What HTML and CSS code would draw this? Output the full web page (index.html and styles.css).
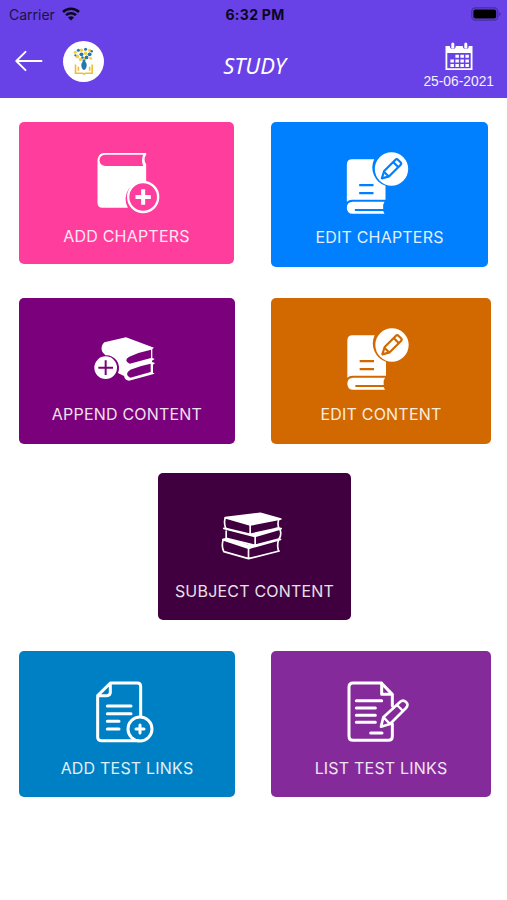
FILE: index.html
```
<!DOCTYPE html>
<html lang="en">
<head>
  <meta charset="UTF-8">
  <meta name="viewport" content="width=device-width, initial-scale=1.0">
  <title>Study</title>
  <link rel="stylesheet" href="styles.css">
</head>
<body>
  <header class="header">
    <div class="status-bar">
      <div class="status-left">
        <span class="carrier">Carrier</span>
        <svg class="wifi" viewBox="0 0 18 14" fill="none" stroke="#0b0620">
          <path d="M1 5a11.5 11.5 0 0 1 16 0" stroke-width="2.5"/>
          <path d="M4 8.2a7.2 7.2 0 0 1 10 0" stroke-width="2.5"/>
          <path d="M9 13.5 6 10.6a4.3 4.3 0 0 1 6 0z" fill="#0b0620" stroke="none"/>
        </svg>
      </div>
      <span class="time">6:32 PM</span>
      <svg class="battery" viewBox="0 0 30 14">
        <rect x=".8" y=".8" width="26" height="12.4" rx="3.6" fill="none" stroke="#43309a" stroke-width="1.2"/>
        <rect x="2.4" y="2.4" width="22.8" height="9.2" rx="2" fill="#000"/>
        <path d="M28.2 5v4q1.4-.6 1.4-2t-1.4-2z" fill="#43309a"/>
      </svg>
    </div>
    <div class="nav-bar">
      <div class="nav-left">
        <a class="back" href="#" aria-label="Back">
          <svg viewBox="0 0 28 22" fill="none" stroke="#fff" stroke-width="1.9" stroke-linecap="round" stroke-linejoin="round"><path d="M26.5 11H1.5M10.5 1.8 1.3 11l9.2 9.2"/></svg>
        </a>
        <div class="logo">
          <svg viewBox="0 0 40 40">
            <g fill="#f2cf3b">
              <circle cx="12" cy="11" r="1.5"/><circle cx="14" cy="15" r="1.8"/><circle cx="18" cy="9" r="1.6"/><circle cx="22" cy="12" r="1.7"/><circle cx="26" cy="9" r="1.5"/><circle cx="17" cy="18" r="1.6"/><circle cx="27" cy="17" r="1.4"/><circle cx="21" cy="17" r="1.3"/>
            </g>
            <g fill="#2478ad">
              <circle cx="15" cy="9" r="1.5"/><circle cx="12" cy="14" r="1"/><circle cx="18" cy="13" r="1.9"/><circle cx="22" cy="8" r="1.5"/><circle cx="26" cy="13" r="1.9"/><circle cx="28" cy="10" r="1.2"/><circle cx="23" cy="16" r="1.8"/><circle cx="19" cy="16" r="1.2"/>
              <path d="M19 18h3l-.3 2c2 2.2 2 5-.2 8h-2c-2.200-3-2.200-5.800-.2-8z"/>
            </g>
            <path d="M12.200 23v8.500h6.300q2 0 2 1.500 0-1.500 2-1.500h6V23M15 25v4M26 25v4" fill="none" stroke="#eebd3a" stroke-width="1.600"/>
          </svg>
        </div>
      </div>
      <h1 class="title">STUDY</h1>
      <div class="date">
        <svg class="calendar" viewBox="0 0 28 29">
          <path fill="#fff" fill-rule="evenodd" d="M.5 4h4.300a3 3 0 0 0 6 0h7a3 3 0 0 0 6 0h3.700v24H.5zM2.300 11v15.200h23.400V11z"/>
          <rect x="6.300" y=".5" width="3" height="6.200" rx="1.500" fill="#fff"/>
          <rect x="19.300" y=".5" width="3" height="6.200" rx="1.500" fill="#fff"/>
          <path stroke="#fff" stroke-width="3.100" stroke-dasharray="3.500 1.500" d="M10.400 14.300h13.500M5.400 19h18.500M5.400 23.500h18.500"/>
        </svg>
        <span class="date-text">25-06-2021</span>
      </div>
    </div>
  </header>

  <svg class="defs" aria-hidden="true">
    <symbol id="book-edit" viewBox="0 0 300 240">
      <path fill="#fff" d="M65 58h66a57 57 0 0 0 34 79v42H64q-9 0-15 6V74q0-16 16-16z"/>
      <path class="cut" fill="none" stroke-width="7" d="M86 135.500h43M86 159.500h43"/>
      <path fill="#fff" d="M162 185H67q-18 0-18 18t18 18h95l-4-8H73v-6h85v-13z"/>
      <circle cx="183" cy="87" r="50" fill="#fff"/>
      <g class="cut" fill="none" stroke-width="6.500" stroke-linejoin="round">
        <path d="m154 115 7-22 34-34q4-3 8 1l7 7q4 4 0 8l-34 34z"/>
        <path d="m188 66 15 15M160 95l14 14"/>
      </g>
    </symbol>
  </svg>

  <main class="menu">
    <a class="card add-chapters" href="#">
      <svg class="icon" viewBox="-10.500 0 300 240">
        <path fill="#fff" d="M51 65c0-17 8-26 21-26h125v5q-10 13 0 29v53a52 52 0 0 0-55 77H66q-15 0-15-15z"/>
        <path class="cut-fill" d="M74 44h114q-7 16 0 34H74q-17-2-17-17t17-17z"/>
        <circle cx="188" cy="171" r="45" fill="none" stroke="#fff" stroke-width="7"/>
        <path stroke="#fff" stroke-width="12" d="M165 171h46M188 148v46"/>
      </svg>
      <span class="label">ADD CHAPTERS</span>
    </a>
    <a class="card edit-chapters" href="#">
      <svg class="icon" viewBox="-1.500 0 300 240"><use href="#book-edit" width="300" height="240"/></svg>
      <span class="label">EDIT CHAPTERS</span>
    </a>
    <a class="card append-content" href="#">
      <svg class="icon short" viewBox="-9 0 300 210">
        <path fill="#fff" d="m138 37 84 31-5 4v27l7 3-8 5v4l9 3-6 5v24l5 3-77 21q-12 0-15-14l-18-9a38 38 0 0 0-38-53l-3-4c-10-6-12-25 0-35z"/>
        <path class="cut-fill" d="M148 95q30-14 65-21v25l-64 17q-20-10-1-21zM151 134q29-12 61-18v25l-61 17q-20-10 0-24z"/>
        <circle cx="77" cy="128" r="34" fill="#fff"/>
        <path class="cut" stroke-width="6" d="M55 128h44M77 106v44"/>
      </svg>
      <span class="label">APPEND CONTENT</span>
    </a>
    <a class="card edit-content" href="#">
      <svg class="icon" viewBox="0 0 300 240"><use href="#book-edit" width="300" height="240"/></svg>
      <span class="label">EDIT CONTENT</span>
    </a>
    <a class="card subject-content" href="#">
      <svg class="icon short" viewBox="-1.500 0 300 210">
        <g stroke="#fff" stroke-width="5" stroke-linejoin="round" stroke-linecap="round">
          <path class="cut-fill" d="M53 119q-6 20 2 36l74 21 92-23M219 120q-5 17 0 33M129 147v29"/>
          <path fill="#fff" d="m52 119 11-3 63 20 85-19 14 1-96 27z"/>
          <path class="cut-fill" d="M62 93v22l86 21 72-19q10-14 3-29M149 111v24"/>
          <path fill="#fff" d="m55 85 6-1 74 20 80-20 12 2-79 23z"/>
          <path class="cut-fill" d="M59 54q-5 18 3 32l72 17 85-19M220 58q-5 14 0 26M134 76v26"/>
          <path fill="#fff" d="m59 53 106-13 61 17-92 18z"/>
        </g>
      </svg>
      <span class="label">SUBJECT CONTENT</span>
    </a>
    <a class="card add-test" href="#">
      <svg class="icon" viewBox="-9 0 300 240">
        <g fill="none" stroke="#fff" stroke-width="9" stroke-linecap="round" stroke-linejoin="round">
          <path d="M182 138V49q0-10-10-10H91L53 77v125q0 10 10 10h112M91 39v28q0 10-10 10H53"/>
          <path d="M82 108h71M82 131h71M82 154h35M82 177h35"/>
          <circle cx="180" cy="177" r="36"/>
          <path d="M168 177h24M180 165v24"/>
        </g>
      </svg>
      <span class="label">ADD TEST LINKS</span>
    </a>
    <a class="card list-test" href="#">
      <svg class="icon" viewBox="3 0 300 240">
        <g fill="none" stroke="#fff" stroke-width="9" stroke-linecap="round" stroke-linejoin="round">
          <path d="M187 108V73l-33-34H69q-12 0-12 12v148q0 12 12 12h106q12 0 12-12v-38M155 39v34h32"/>
          <path d="M79 92h76M79 114h57M79 136h57M79 157h57M122 189h34"/>
          <path stroke-width="8" d="m153 170 7-28 50-46q9-8 18 0t0 18l-48 48z"/>
          <path stroke-width="7" d="m201 105 18 18M161 142l18 19"/>
        </g>
      </svg>
      <span class="label">LIST TEST LINKS</span>
    </a>
  </main>
</body>
</html>
```

FILE: styles.css
```
* {
  box-sizing: border-box;
}
body {
  margin: 0;
  min-height: 100vh;
  background: #fff;
  font-family: Inter, Arial, sans-serif;
}
svg {
  display: block;
}
.defs {
  position: absolute;
  width: 0;
  height: 0;
}

/* header */
.header {
  height: 98px;
  background: #6842e6;
}
.status-bar {
  display: grid;
  grid-template-columns: 1fr auto 1fr;
  align-items: center;
  height: 28px;
  padding: 0 6px 0 9px;
  color: #0b0620;
}
.status-left {
  display: flex;
  align-items: center;
  gap: 7px;
}
.carrier {
  font-size: 14px;
  color: #1c1145;
}
.wifi {
  width: 18px;
  height: 14px;
}
.time {
  font-size: 14px;
  font-weight: 700;
  letter-spacing: 0.3px;
}
.battery {
  width: 30px;
  height: 14px;
  justify-self: end;
}
.nav-bar {
  display: grid;
  grid-template-columns: 1fr auto 1fr;
  height: 70px;
  padding: 0 13px 0 15px;
}
.nav-left {
  display: flex;
  align-items: center;
  gap: 20px;
  height: 66px;
}
.back svg {
  width: 28px;
  height: 22px;
}
.logo {
  width: 41px;
  height: 41px;
  border-radius: 50%;
  background: #fff;
}
.title {
  margin: 21px 0 0;
  font-family: "Noto Sans", sans-serif;
  font-size: 22px;
  font-style: italic;
  font-weight: 400;
  line-height: 32px;
  color: #fff;
}
.date {
  display: flex;
  flex-direction: column;
  align-items: center;
  justify-self: end;
  padding-top: 14px;
}
.calendar {
  width: 28px;
  height: 29px;
}
.date-text {
  margin-top: 3px;
  font-family: "Liberation Sans", Arial, sans-serif;
  font-size: 13.8px;
  line-height: 16px;
  color: #f4f0ff;
}

/* menu cards */
.menu {
  display: grid;
  grid-template-columns: 252px 220px;
  grid-template-rows: 176px 175px 178px 146px;
  align-items: start;
  padding: 24px 16px 0 19px;
}
.card {
  display: flex;
  flex-direction: column;
  align-items: center;
  width: 216px;
  height: 146px;
  padding-top: 18px;
  border-radius: 5px;
  background: var(--bg);
  color: #fff;
  text-decoration: none;
}
.icon {
  width: 100px;
  height: 80px;
}
.icon.short {
  height: 70px;
}
.cut {
  stroke: var(--bg);
}
.cut-fill {
  fill: var(--bg);
}
.label {
  margin-top: 6px;
  font-size: 16px;
  line-height: 24px;
  letter-spacing: 0.2px;
  white-space: nowrap;
  opacity: 0.88;
}
.add-chapters {
  --bg: #ff3d9c;
  width: 215px;
  height: 142px;
}
.add-chapters .label {
  margin-top: 4px;
}
.edit-chapters {
  --bg: #0080ff;
  width: 217px;
  height: 145px;
}
.edit-chapters .label {
  margin-top: 5px;
}
.append-content {
  --bg: #7b007b;
  padding-top: 27px;
}
.append-content .label {
  margin-top: 7px;
}
.edit-content {
  --bg: #d16900;
  width: 220px;
}
.subject-content {
  --bg: #400040;
  grid-column: 1 / 3;
  justify-self: center;
  width: 193px;
  height: 147px;
  margin-right: 1px;
  padding-top: 27px;
}
.subject-content .label {
  margin-top: 9px;
}
.add-test {
  --bg: #0080c4;
  padding-top: 19px;
}
.list-test {
  --bg: #852a9b;
  width: 220px;
  padding-top: 19px;
}
```
